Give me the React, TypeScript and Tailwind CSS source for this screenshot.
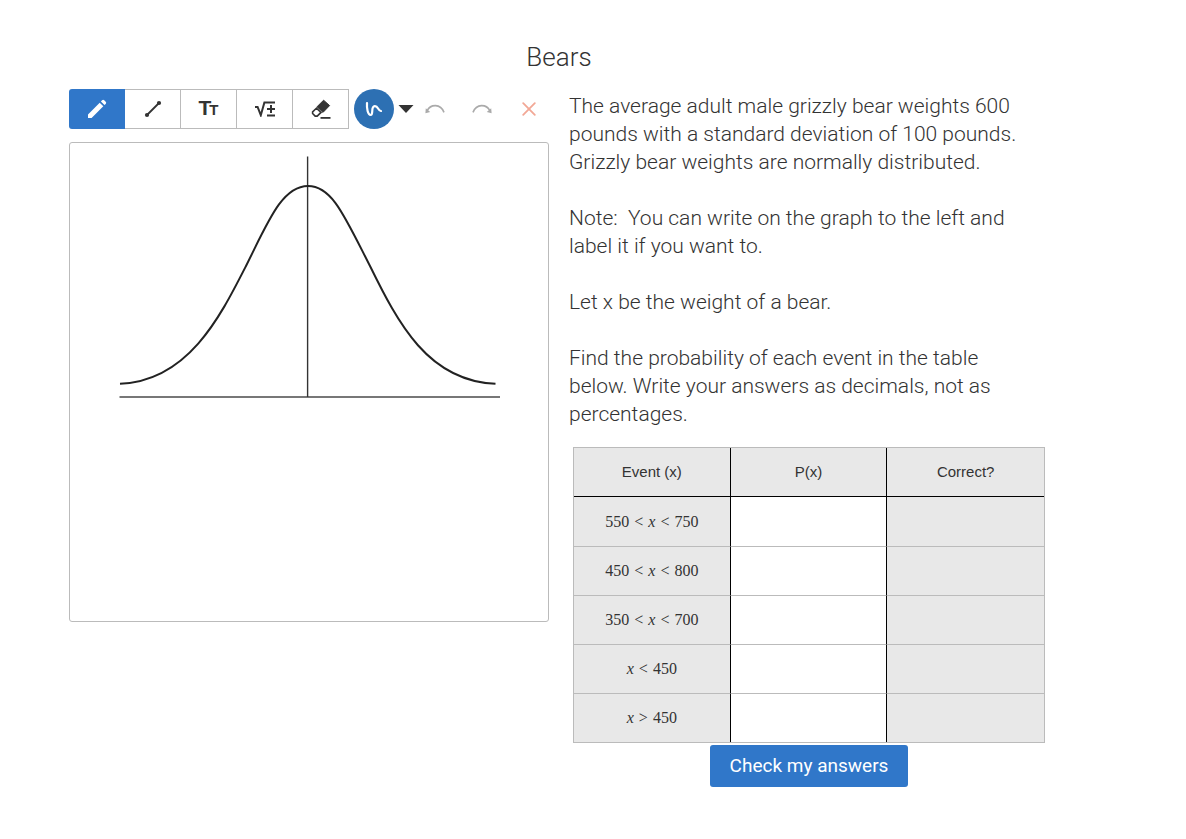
import type { ReactNode } from 'react';

const tools: { label: string; icon: ReactNode }[] = [
  { label: 'Pencil', icon: <PencilIcon /> },
  { label: 'Line', icon: <LineIcon /> },
  { label: 'Text', icon: <TextIcon /> },
  { label: 'Math', icon: <MathIcon /> },
  { label: 'Eraser', icon: <EraserIcon /> },
];

const events = [
  ['550', '<', 'x', '<', '750'],
  ['450', '<', 'x', '<', '800'],
  ['350', '<', 'x', '<', '700'],
  ['x', '<', '450'],
  ['x', '>', '450'],
];

export default function App() {
  return (
    <main className="pt-[39px] pr-[137px] pb-10 pl-[69px] font-['Roboto',sans-serif] font-light text-[#333]">
      <h1 className="text-center text-[26px] leading-9">Bears</h1>
      <div className="mt-3.5 grid grid-cols-2 items-start gap-5">
        <section aria-label="Sketch">
          <Toolbar />
          <Graph />
        </section>
        <section>
          <Prompt />
          <AnswerTable />
          <div className="mt-0.5 flex justify-center">
            <button
              type="button"
              className="h-[42px] rounded-[3px] bg-[#3077c9] px-5 text-[19px] font-normal text-white"
            >
              Check my answers
            </button>
          </div>
        </section>
      </div>
    </main>
  );
}

function Toolbar() {
  return (
    <div className="flex h-10 items-center">
      <div className="flex">
        {tools.map((tool, i) => (
          <button
            key={tool.label}
            type="button"
            aria-label={tool.label}
            aria-pressed={i === 0}
            className={
              i === 0
                ? 'flex h-10 w-14 items-center justify-center rounded-l-[3px] bg-[#3077c9] text-white'
                : 'flex h-10 w-14 items-center justify-center border border-l-0 border-[#bbb] text-[#333]'
            }
          >
            {tool.icon}
          </button>
        ))}
      </div>
      <button
        type="button"
        aria-label="Stroke color"
        className="ml-[5px] flex size-10 items-center justify-center rounded-full bg-[#2d70b3]"
      >
        <SquiggleIcon />
      </button>
      <button type="button" aria-label="More colors" className="ml-1 flex h-10 w-4 items-center justify-center">
        <svg width="16" height="10" viewBox="0 0 16 10">
          <path d="M0.5 1h15L8 9z" fill="#333" />
        </svg>
      </button>
      <div className="ml-auto flex gap-[7px]">
        <button type="button" aria-label="Undo" className="flex size-10 items-center justify-center">
          <UndoIcon />
        </button>
        <button type="button" aria-label="Redo" className="flex size-10 items-center justify-center">
          <UndoIcon flipped />
        </button>
        <button type="button" aria-label="Clear" className="flex size-10 items-center justify-center">
          <svg width="14" height="14" viewBox="0 0 14 14" stroke="#f2a896" strokeWidth="1.8" strokeLinecap="round">
            <path d="M1.2 1.2l11.6 11.6M12.8 1.2L1.2 12.8" />
          </svg>
        </button>
      </div>
    </div>
  );
}

function Graph() {
  return (
    <div className="mt-[13px] rounded-[3px] border border-[#bbb]">
      <svg
        viewBox="0 0 478 478"
        className="block w-full"
        fill="none"
        role="img"
        aria-label="Normal curve"
      >
        <path d="M49.5 254H430" stroke="#777" strokeWidth="2" />
        <path d="M237.6 13.5V254" stroke="#333" strokeWidth="1.4" />
        <path
          d="M50 240.8C118 238 150 174 176 123C198 79 212 43 238 43C262 43 274 72 300 123C328 180 358 238 425.5 240.8"
          stroke="#222"
          strokeWidth="2"
        />
      </svg>
    </div>
  );
}

function Prompt() {
  return (
    <div className="space-y-7 pt-[3px] pr-5 text-[21px] leading-7">
      <p>
        The average adult male grizzly bear weights 600 pounds with a standard deviation of 100
        pounds. Grizzly bear weights are normally distributed.
      </p>
      <p>Note:&nbsp; You can write on the graph to the left and label it if you want to.</p>
      <p>Let x be the weight of a bear.</p>
      <p>
        Find the probability of each event in the table below. Write your answers as decimals, not
        as percentages.
      </p>
    </div>
  );
}

function AnswerTable() {
  return (
    <div className="mx-1 mt-[19px] border border-[#bbb]">
      <table className="w-full table-fixed border-separate border-spacing-0 text-center">
        <thead className="font-['Liberation_Sans',sans-serif] text-[15px]">
          <tr className="h-[49px] bg-[#e8e8e8]">
            <th className="border-r border-b border-black p-0 font-normal">Event (x)</th>
            <th className="border-r border-b border-black p-0 font-normal">P(x)</th>
            <th className="border-b border-black p-0 font-normal">Correct?</th>
          </tr>
        </thead>
        <tbody>
          {events.map((parts) => (
            <tr key={parts.join('')} className="group h-[49px] first:h-[50px] last:h-12">
              <td className="border-r border-b border-r-black border-b-[#bbb] bg-[#e8e8e8] p-0 group-last:border-b-0">
                <Formula parts={parts} />
              </td>
              <td className="border-r border-b border-r-black border-b-[#bbb] p-0 group-last:border-b-0">
                <input
                  type="text"
                  aria-label={`P(${parts.join(' ')})`}
                  className="block h-12 w-full bg-white text-center text-[15px] outline-none"
                />
              </td>
              <td className="border-b border-[#bbb] bg-[#e8e8e8] p-0 group-last:border-b-0" />
            </tr>
          ))}
        </tbody>
      </table>
    </div>
  );
}

function Formula({ parts }: { parts: string[] }) {
  return (
    <span className="flex justify-center gap-[5px] font-['Liberation_Serif',serif] text-[16px] leading-5 font-normal">
      {parts.map((part, i) => (
        <span key={i} className={part === 'x' ? 'italic' : ''}>
          {part}
        </span>
      ))}
    </span>
  );
}

function PencilIcon() {
  return (
    <svg width="20" height="20" viewBox="0 0 20 20" fill="currentColor">
      <path d="M1 19v-3.6L12.7 3.7l3.6 3.6L4.6 19zM13.9 2.5l1.2-1.2a1.5 1.5 0 0 1 2.1 0l1.5 1.5a1.5 1.5 0 0 1 0 2.1l-1.2 1.2z" />
    </svg>
  );
}

function LineIcon() {
  return (
    <svg width="18" height="18" viewBox="0 0 18 18" fill="currentColor">
      <path d="M3 15L15 3" stroke="currentColor" strokeWidth="1.8" />
      <circle cx="3" cy="15" r="2.1" />
      <circle cx="15" cy="3" r="2.1" />
    </svg>
  );
}

function TextIcon() {
  return (
    <span className="flex items-baseline font-['Liberation_Sans',sans-serif] leading-6 font-bold">
      <span className="text-[21px]">T</span>
      <span className="-ml-0.5 text-[15px]">T</span>
    </span>
  );
}

function MathIcon() {
  return (
    <svg width="20" height="16" viewBox="0 0 20 16" fill="none" stroke="currentColor" strokeWidth="2">
      <path d="M0 6h2.6L5.8 14.2L9.4 1.5H20" />
      <path d="M12 8h8M16 4v8M12 14.5h8" />
    </svg>
  );
}

function EraserIcon() {
  return (
    <svg width="20" height="20" viewBox="0 0 20 20" fill="none" stroke="currentColor">
      <path d="M12.6 1.2L18.6 6.6L12 13.4L6 7.8z" fill="currentColor" strokeWidth="1" />
      <path d="M5.4 9.2L1.6 12.9v1.6l2.6 2.6h2L10 13.4z" strokeWidth="1.6" />
      <path d="M9.5 18.9h10" strokeWidth="1.8" />
    </svg>
  );
}

function SquiggleIcon() {
  return (
    <svg width="18" height="16" viewBox="0 0 18 16" fill="none" stroke="#fff" strokeWidth="2.2" strokeLinecap="round">
      <path d="M2 2C1.6 7.5 2.8 14 5.6 14C9 14 5.2 5.6 9.8 5.2C13.4 5 12.6 9.4 16 10" />
    </svg>
  );
}

function UndoIcon({ flipped }: { flipped?: boolean }) {
  return (
    <svg width="20" height="10" viewBox="0 0 20 10" fill="none" className={flipped ? '-scale-x-100' : ''}>
      <path d="M2.2 6.6C5.5 0.2 15.5-.8 19 8.4" stroke="#aaa" strokeWidth="1.6" />
      <path d="M.8 4.2L.4 9.2L5.2 8z" fill="#aaa" />
    </svg>
  );
}
